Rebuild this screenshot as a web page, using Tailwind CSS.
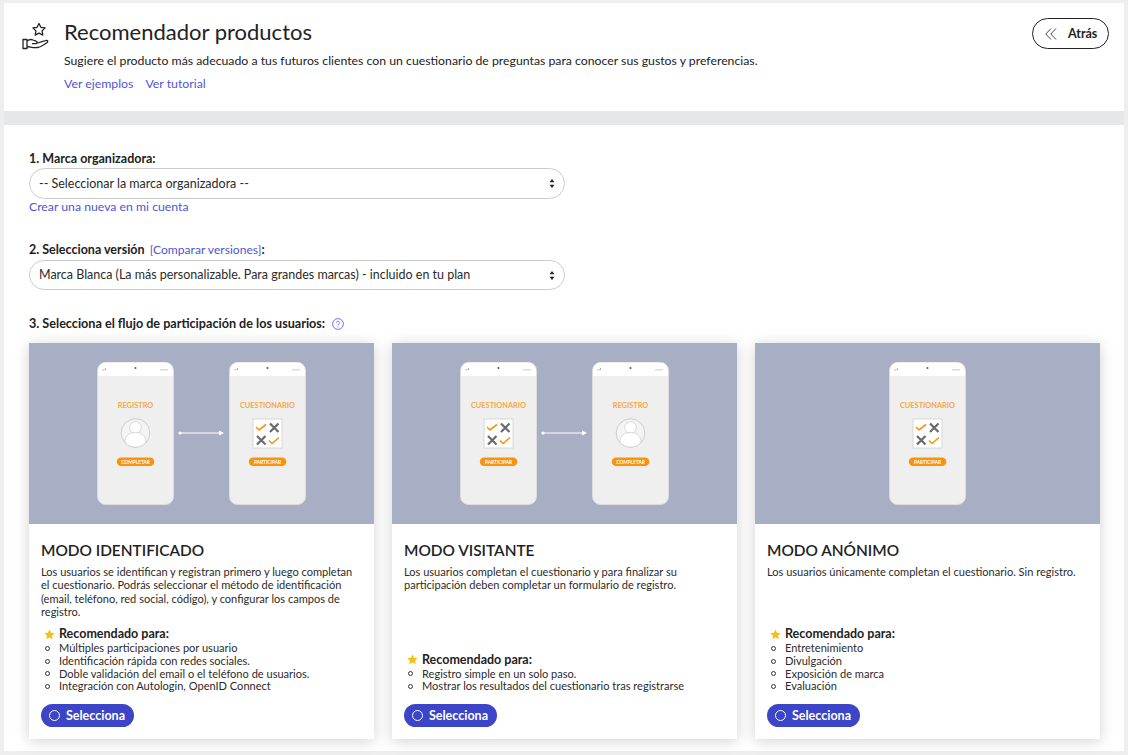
<!DOCTYPE html>
<html lang="es"><head><meta charset="utf-8"><title>Recomendador productos</title>
<script src="https://cdn.jsdelivr.net/npm/@tailwindcss/browser@4"></script></head>
<body class="bg-[#eeeeee] font-['Lato','Open_Sans',sans-serif] text-[#212529] h-[755px] overflow-hidden">
<svg class="hidden" width="0" height="0">
<symbol id="phone" viewBox="0 0 77 143" overflow="visible">
<rect x=".5" y=".5" width="76" height="142" rx="8" fill="#efefef" stroke="#dcdcdc"/>
<path d="M1 14V8.500a8 8 0 0 1 8-8h59a8 8 0 0 1 8 8V14z" fill="#fff"/>
<path d="M5.500 8h1M7 8V7M8.500 8V6" stroke="#999" stroke-width=".8"/>
<circle cx="38.500" cy="6" r="1" fill="#555"/>
<rect x="63" y="7" width="8" height="1.500" fill="#ddd"/>
</symbol>
<symbol id="reg" viewBox="0 0 77 143" overflow="visible">
<use href="#phone" width="77" height="143"/>
<text x="38.500" y="45.500" text-anchor="middle" font-size="7.400" font-weight="700" fill="#f8a740" font-family="Lato">REGISTRO</text>
<circle cx="38.500" cy="71" r="14.300" fill="#f4f4f4" stroke="#bdbdbd" stroke-width=".7"/>
<circle cx="38.500" cy="65.500" r="5.800" fill="#fff" stroke="#c4c4c4" stroke-width=".6"/>
<path d="M28 80.500c0-7 4-10 10.500-10s10.500 3 10.500 10a14.300 14.300 0 0 1-21 0z" fill="#fff" stroke="#c4c4c4" stroke-width=".6"/>
<rect x="19.800" y="95.500" width="37.500" height="8.500" rx="4.200" fill="#f9930b"/>
<text x="38.500" y="101.600" text-anchor="middle" font-size="4.800" font-weight="700" fill="#fff" font-family="Lato">COMPLETAR</text>
</symbol>
<symbol id="cue" viewBox="0 0 77 143" overflow="visible">
<use href="#phone" width="77" height="143"/>
<text x="38.500" y="45.500" text-anchor="middle" font-size="7.400" font-weight="700" fill="#f8a740" font-family="Lato">CUESTIONARIO</text>
<rect x="24" y="57" width="29" height="29" fill="#fff" stroke="#d8d8d8"/>
<path d="M27 65l3 3 7-5.500M40 78.500l3 3 7-6" fill="none" stroke="#f9930b" stroke-width="1.600"/>
<path d="M41 61.500l8.500 8.500M49.500 61.500L41 70M28 74l8.500 8.500M36.500 74L28 82.500" stroke="#6a6a6a" stroke-width="2.200"/>
<rect x="19.800" y="95.500" width="37.500" height="8.500" rx="4.200" fill="#f9930b"/>
<text x="38.500" y="101.600" text-anchor="middle" font-size="4.800" font-weight="700" fill="#fff" font-family="Lato">PARTICIPAR</text>
</symbol>
<symbol id="arrow" viewBox="0 0 48 8" overflow="visible">
<path d="M2 4h40" stroke="#fff" stroke-width="1.200"/><circle cx="2" cy="4" r="1.600" fill="#fff"/><path d="M41 1.500l5 2.500-5 2.500z" fill="#fff"/>
</symbol>
</svg>
<main class="mx-1 mt-[3px] bg-white h-[748px]">
<header class="h-[108px] flex pl-[18px] pr-[15px]">
<svg class="w-[28px] h-[28px] mt-[19px] text-[#222]" viewBox="0 0 28 28" fill="none" stroke="currentColor" stroke-width="1.300" stroke-linejoin="round"><path d="M17 1.500l1.900 3.800 4.200.6-3 3 .7 4.200-3.800-2-3.800 2 .7-4.200-3-3 4.200-.6z"/><path d="M1 17.500h4v9H1zM5 19c2-1.500 4-2 6-1l3 1.200c1.500.5 1.500 2.500-.3 2.500H10M14 21.500l6-1.800 4-1.200c1.700-.300 2.500 1.200 1 2.200-3 2-6 4.300-9 4.800-4 .6-7-.5-11-1"/></svg>
<div class="ml-[14px] flex-1 pt-[14px]">
<h1 class="text-[22px] leading-[30px] text-[#222] font-normal">Recomendador productos</h1>
<p class="text-[12.270px] leading-[18px] mt-[5px] text-[#222]">Sugiere el producto más adecuado a tus futuros clientes con un cuestionario de preguntas para conocer sus gustos y preferencias.</p>
<div class="flex gap-3 mt-[5px] text-[12.300px] leading-[18px] text-[#4f55d8]"><a>Ver ejemplos</a><a>Ver tutorial</a></div>
</div>
<a class="mt-[15px] h-[31px] w-[77px] border border-[#222] rounded-full flex items-center text-[12.500px] font-bold text-[#222] pl-[12px] gap-[11px]">
<svg class="w-[12px] h-[12px]" viewBox="0 0 12 12" fill="none" stroke="#333" stroke-width=".9"><path d="M6 .5L.8 6 6 11.500M11 .5L5.800 6l5.200 5.500"/></svg><span class="pt-px">Atrás</span></a>
</header>
<div class="h-[14px] bg-[#e5e7e9]"></div>
<section class="px-[25px] pt-[27px]">
<label class="block text-[12.500px] leading-[14px] font-bold text-[#222]">1. Marca organizadora:</label>
<div class="mt-[2px] w-[536px] h-[31px] border border-[#ccc] rounded-full flex items-center justify-between pl-[9px] pr-[9px] text-[12.500px] text-[#2b2b2b]"><span class="pt-px">-- Seleccionar la marca organizadora --</span>
<svg class="w-[6px] h-[9px]" viewBox="0 0 6 9" fill="#222"><path d="M3 0l2.500 3.200h-5zM3 9L.5 5.800h5z"/></svg></div>
<a class="block text-[12.250px] leading-[16px] text-[#4f55d8]">Crear una nueva en mi cuenta</a>
<div class="mt-[28px] text-[12.500px] leading-[14px] font-bold text-[#222]">2. Selecciona versión <span class="font-normal ml-[2px] text-[12.100px] text-[#4f55d8]">[Comparar versiones]</span>:</div>
<div class="mt-[3px] w-[536px] h-[30px] border border-[#ccc] rounded-full flex items-center justify-between pl-[9px] pr-[9px] text-[12.470px] text-[#2b2b2b]"><span>Marca Blanca (La más personalizable. Para grandes marcas) - incluido en tu plan</span>
<svg class="w-[6px] h-[9px]" viewBox="0 0 6 9" fill="#222"><path d="M3 0l2.500 3.200h-5zM3 9L.5 5.800h5z"/></svg></div>
<div class="mt-[27px] flex items-center text-[12.620px] leading-[14px] font-bold text-[#222]">3. Selecciona el flujo de participación de los usuarios:
<svg class="ml-[7px] w-[12px] h-[12px]" viewBox="0 0 12 12" fill="none" stroke="#4f55d8" stroke-width=".8"><circle cx="6" cy="6" r="5.400"/><path d="M4.500 4.800c0-2 3-2 3 0 0 1.200-1.500 1.200-1.500 2.500"/><path d="M6 8.500v.9"/></svg></div>
<div class="mt-[12px] grid grid-cols-[345px_345px_345px] gap-[18px]">

<article class="h-[396px] bg-white shadow-[0_2px_14px_rgba(0,0,0,0.18)] flex flex-col">
<div class="h-[181px] bg-[#a8afc4]"><svg class="w-[345px] h-[181px]" viewBox="0 0 345 181"><use href="#reg" x="68" y="19" width="77" height="143"/><use href="#arrow" x="149" y="86" width="48" height="8"/><use href="#cue" x="200" y="19" width="77" height="143"/></svg></div>
<div class="flex-1 flex flex-col px-3 pt-[16px] pb-3">
<h2 class="text-[15.400px] leading-[20px] text-[#222] font-semibold">MODO IDENTIFICADO</h2>
<p class="mt-[5px] text-[11.060px] leading-[13.300px] h-[54px] text-[#2b2b2b]">Los usuarios se identifican y registran primero y luego completan el cuestionario. Podrás seleccionar el método de identificación (email, teléfono, red social, código), y configurar los campos de registro.</p>
<div class="mt-auto flex items-center text-[12.500px] leading-[14px] font-bold text-[#222] pl-[3px]"><svg class="w-[11px] h-[11px] mr-[4px]" viewBox="0 0 24 24" fill="#f5c211"><path d="M12 1l3.400 7.300 7.900.9-5.900 5.400 1.600 7.900L12 18.600l-7 3.900 1.600-7.900L.7 9.200l7.900-.9z"/></svg>Recomendado para:</div>
<ul class="mt-[1px] text-[11.060px] leading-[12.700px] text-[#2b2b2b] list-none">
<li class="flex items-center"><span class="w-[5px] h-[5px] rounded-full border border-[#333] ml-[4px] mr-[9px]"></span>Múltiples participaciones por usuario</li>
<li class="flex items-center"><span class="w-[5px] h-[5px] rounded-full border border-[#333] ml-[4px] mr-[9px]"></span>Identificación rápida con redes sociales.</li>
<li class="flex items-center"><span class="w-[5px] h-[5px] rounded-full border border-[#333] ml-[4px] mr-[9px]"></span>Doble validación del email o el teléfono de usuarios.</li>
<li class="flex items-center"><span class="w-[5px] h-[5px] rounded-full border border-[#333] ml-[4px] mr-[9px]"></span>Integración con Autologin, OpenID Connect</li>
</ul>
<a class="mt-[11px] w-[93px] h-[23px] rounded-full bg-[#3c45c8] text-white text-[12.500px] font-bold flex items-center pl-[8px] gap-[6px]"><span class="w-[11px] h-[11px] rounded-full border border-white"></span><span class="pt-px">Selecciona</span></a>
</div></article>

<article class="h-[396px] bg-white shadow-[0_2px_14px_rgba(0,0,0,0.18)] flex flex-col">
<div class="h-[181px] bg-[#a8afc4]"><svg class="w-[345px] h-[181px]" viewBox="0 0 345 181"><use href="#cue" x="68" y="19" width="77" height="143"/><use href="#arrow" x="149" y="86" width="48" height="8"/><use href="#reg" x="200" y="19" width="77" height="143"/></svg></div>
<div class="flex-1 flex flex-col px-3 pt-[16px] pb-3">
<h2 class="text-[15.400px] leading-[20px] text-[#222] font-semibold">MODO VISITANTE</h2>
<p class="mt-[5px] text-[11.060px] leading-[13.300px] h-[54px] text-[#2b2b2b]">Los usuarios completan el cuestionario y para finalizar su participación deben completar un formulario de registro.</p>
<div class="mt-auto flex items-center text-[12.500px] leading-[14px] font-bold text-[#222] pl-[3px]"><svg class="w-[11px] h-[11px] mr-[4px]" viewBox="0 0 24 24" fill="#f5c211"><path d="M12 1l3.400 7.300 7.900.9-5.900 5.400 1.600 7.900L12 18.600l-7 3.900 1.600-7.900L.7 9.200l7.900-.9z"/></svg>Recomendado para:</div>
<ul class="mt-[1px] text-[11.060px] leading-[12.700px] text-[#2b2b2b] list-none">
<li class="flex items-center"><span class="w-[5px] h-[5px] rounded-full border border-[#333] ml-[4px] mr-[9px]"></span>Registro simple en un solo paso.</li>
<li class="flex items-center"><span class="w-[5px] h-[5px] rounded-full border border-[#333] ml-[4px] mr-[9px]"></span>Mostrar los resultados del cuestionario tras registrarse</li>
</ul>
<a class="mt-[11px] w-[93px] h-[23px] rounded-full bg-[#3c45c8] text-white text-[12.500px] font-bold flex items-center pl-[8px] gap-[6px]"><span class="w-[11px] h-[11px] rounded-full border border-white"></span><span class="pt-px">Selecciona</span></a>
</div></article>

<article class="h-[396px] bg-white shadow-[0_2px_14px_rgba(0,0,0,0.18)] flex flex-col">
<div class="h-[181px] bg-[#a8afc4]"><svg class="w-[345px] h-[181px]" viewBox="0 0 345 181"><use href="#cue" x="134" y="19" width="77" height="143"/></svg></div>
<div class="flex-1 flex flex-col px-3 pt-[16px] pb-3">
<h2 class="text-[15.400px] leading-[20px] text-[#222] font-semibold">MODO ANÓNIMO</h2>
<p class="mt-[5px] text-[11.060px] leading-[13.300px] h-[54px] text-[#2b2b2b]">Los usuarios únicamente completan el cuestionario. Sin registro.</p>
<div class="mt-auto flex items-center text-[12.500px] leading-[14px] font-bold text-[#222] pl-[3px]"><svg class="w-[11px] h-[11px] mr-[4px]" viewBox="0 0 24 24" fill="#f5c211"><path d="M12 1l3.400 7.300 7.900.9-5.900 5.400 1.600 7.900L12 18.600l-7 3.900 1.600-7.900L.7 9.200l7.900-.9z"/></svg>Recomendado para:</div>
<ul class="mt-[1px] text-[11.060px] leading-[12.700px] text-[#2b2b2b] list-none">
<li class="flex items-center"><span class="w-[5px] h-[5px] rounded-full border border-[#333] ml-[4px] mr-[9px]"></span>Entretenimiento</li>
<li class="flex items-center"><span class="w-[5px] h-[5px] rounded-full border border-[#333] ml-[4px] mr-[9px]"></span>Divulgación</li>
<li class="flex items-center"><span class="w-[5px] h-[5px] rounded-full border border-[#333] ml-[4px] mr-[9px]"></span>Exposición de marca</li>
<li class="flex items-center"><span class="w-[5px] h-[5px] rounded-full border border-[#333] ml-[4px] mr-[9px]"></span>Evaluación</li>
</ul>
<a class="mt-[11px] w-[93px] h-[23px] rounded-full bg-[#3c45c8] text-white text-[12.500px] font-bold flex items-center pl-[8px] gap-[6px]"><span class="w-[11px] h-[11px] rounded-full border border-white"></span><span class="pt-px">Selecciona</span></a>
</div></article>
</div>
</section>
</main>
</body></html>
